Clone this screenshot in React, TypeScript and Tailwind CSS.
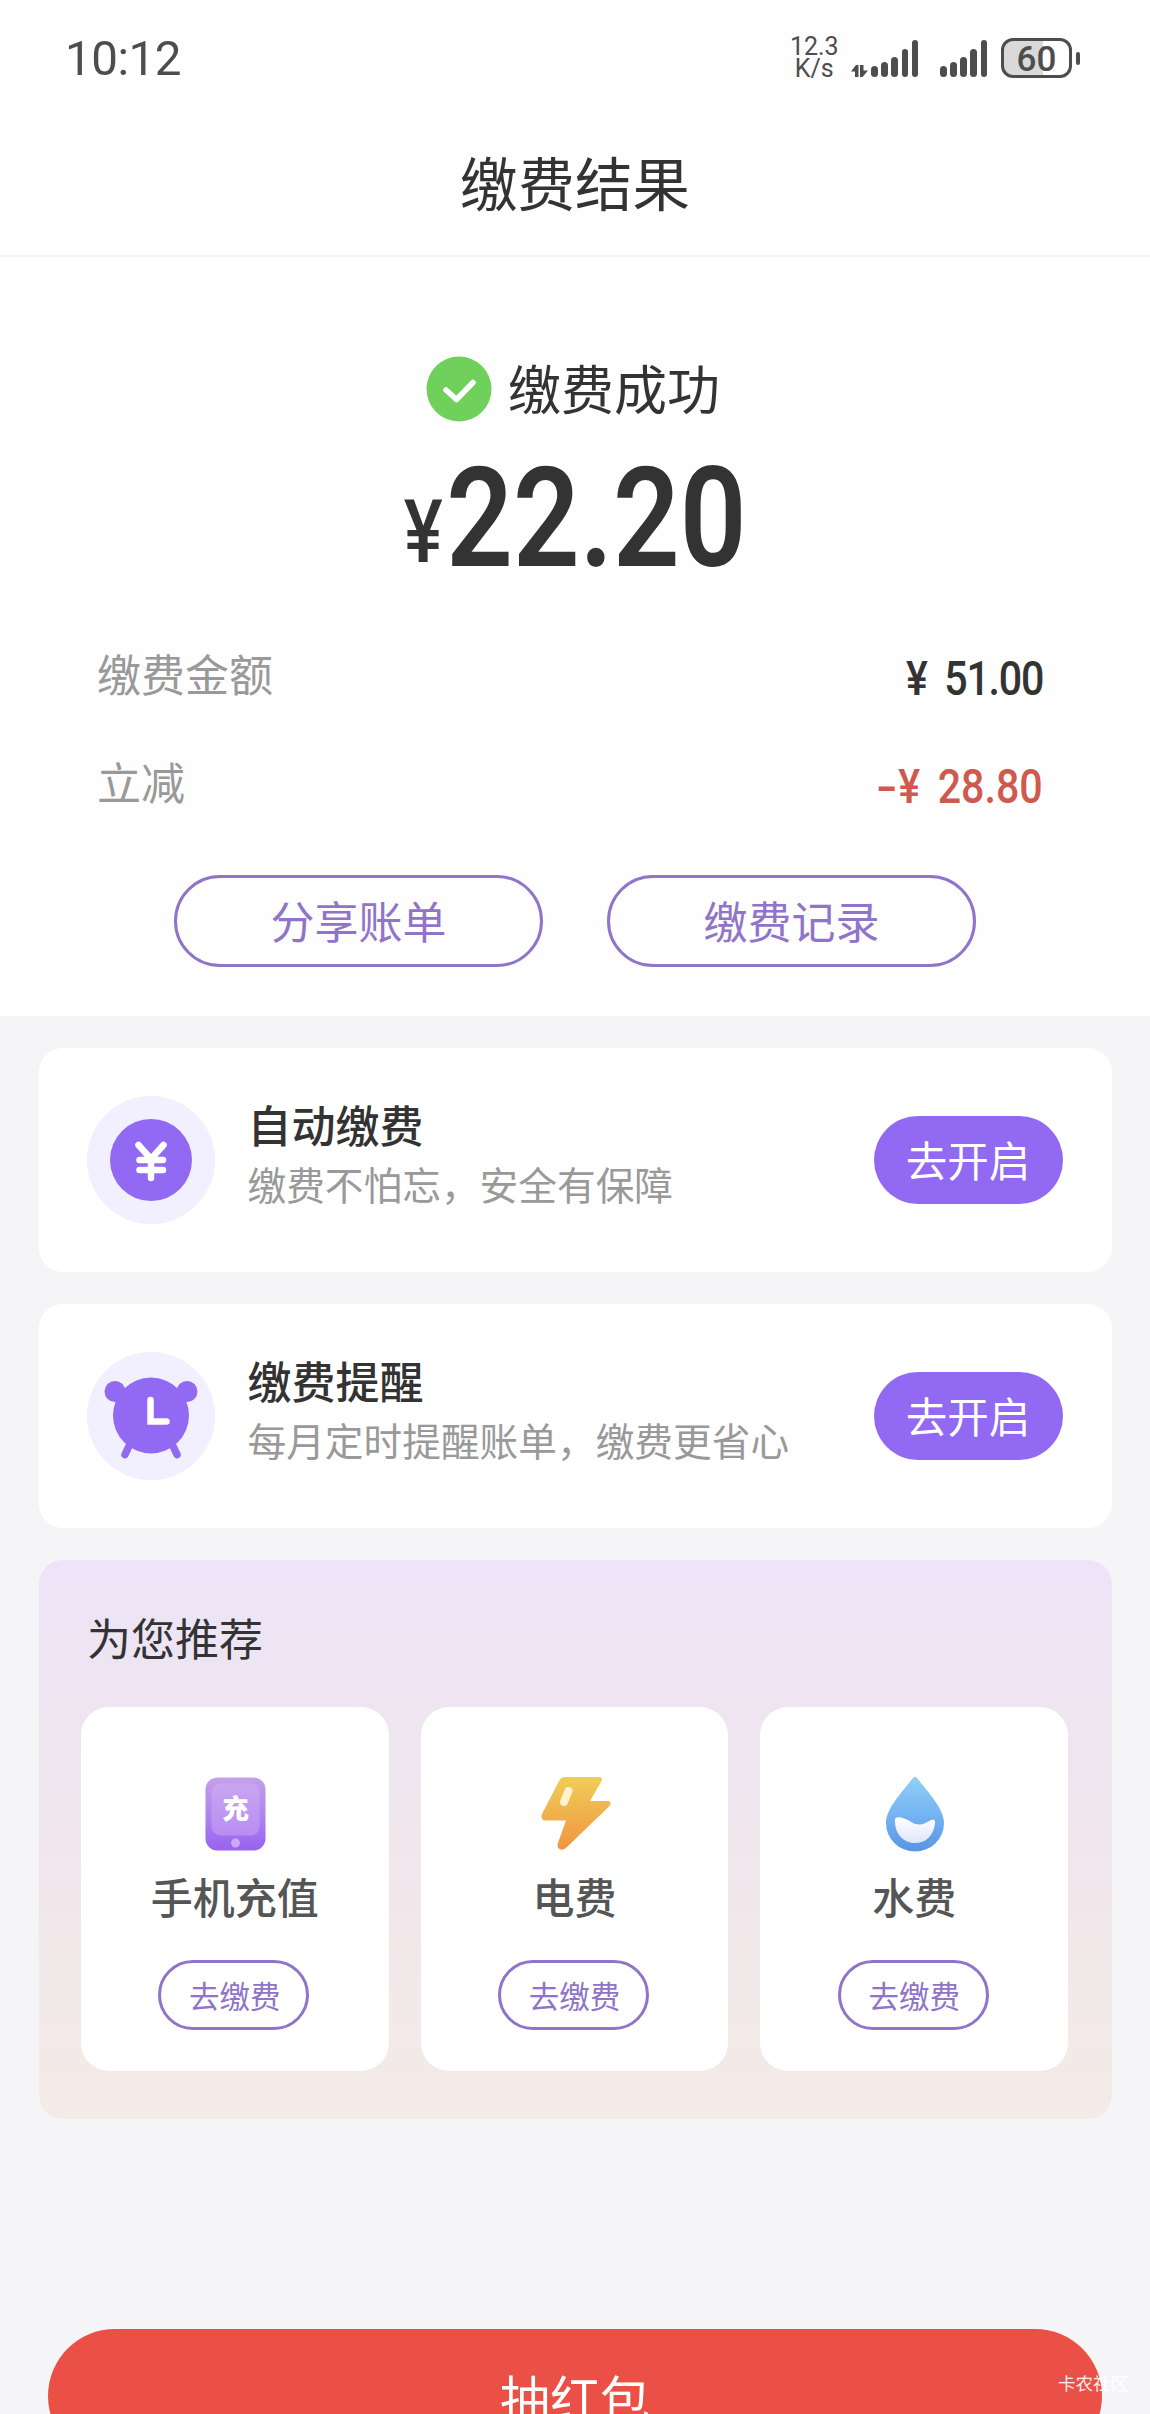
import { ReactNode } from "react";
import { clsx } from "clsx";

const BARS = [11, 15, 20, 28, 37];

function Signal() {
  return (
    <div className="flex items-end gap-[3.6px] h-[37px]">
      {BARS.map((h) => (
        <div key={h} className="w-[6.5px] rounded-full bg-[#4d4d4d]" style={{ height: h }} />
      ))}
    </div>
  );
}

function StatusBar() {
  return (
    <div className="flex h-[116px] items-center justify-between pl-[65px] pr-[70px] font-['Roboto'] text-[#4d4d4d]">
      <span className="origin-left scale-x-[0.97] pt-[2px] text-[49px] leading-[60px] tracking-[-0.5px]">10:12</span>
      <div className="flex items-center">
        <div className="mr-[13px] flex w-[48px] flex-col items-center text-[25px] leading-[22px]">
          <span>12.3</span>
          <span>K/s</span>
        </div>
        <div className="flex items-end pt-[1px]">
          <svg className="mr-[3px]" width="17" height="12" viewBox="0 0 17 12" fill="#4d4d4d">
            <path d="M0 6.5 L5 0 H7.5 V12 H4 V6.5 Z" />
            <path d="M9 0 H12.5 V5.5 H17 L11.5 12 H9 Z" />
          </svg>
          <Signal />
          <div className="w-[22px]" />
          <Signal />
        </div>
        {/* Battery */}
        <div className="ml-[14px] flex items-center gap-[4px]">
          <div className="flex h-[40px] w-[71px] items-center justify-center rounded-[12px] border-[3px] border-[#4d4d4d] bg-linear-to-r from-[#d9d9d9] from-60% to-white to-60% pt-[2px] text-[35px] font-medium leading-none">
            <span>60</span>
          </div>
          <div className="h-[13px] w-[4px] rounded-full bg-[#4d4d4d]" />
        </div>
      </div>
    </div>
  );
}

function CoinIcon() {
  return (
    <svg width="128" height="128" viewBox="0 0 128 128" className="shrink-0">
      <circle cx="64" cy="64" r="64" fill="#f2effe" />
      <circle cx="64" cy="64" r="41" fill="#9169f2" />
      <path
        d="M51.5 49 L64 63 L76.5 49 M64 63 V82 M52.5 64 H76 M52.5 74 H76"
        fill="none"
        stroke="#fff"
        strokeWidth="6.5"
        strokeLinecap="round"
        strokeLinejoin="round"
      />
    </svg>
  );
}

function ClockIcon() {
  return (
    <svg width="128" height="128" viewBox="0 0 128 128" className="shrink-0">
      <circle cx="64" cy="64" r="64" fill="#f2effe" />
      <g fill="#9169f2" stroke="#9169f2">
        <circle cx="28" cy="39.5" r="10.5" stroke="none" />
        <circle cx="100" cy="39.5" r="10.5" stroke="none" />
        <circle cx="64" cy="63.5" r="38" stroke="none" />
        <path d="M43 92 L38 102.5 M85 92 L90 102.5" strokeWidth="7.5" strokeLinecap="round" />
      </g>
      <path d="M63.5 48 V69.5 H79.5" fill="none" stroke="#fff" strokeWidth="6.5" strokeLinecap="round" />
    </svg>
  );
}

function PhoneIcon() {
  return (
    <svg width="61" height="74" viewBox="0 0 62 74" preserveAspectRatio="none">
      <defs>
        <linearGradient id="phone" x1="0" y1="0" x2="0" y2="1">
          <stop offset="0" stopColor="#c5a0ea" />
          <stop offset="0.6" stopColor="#ab7ef0" />
          <stop offset="1" stopColor="#9862ee" />
        </linearGradient>
        <linearGradient id="screen" x1="0" y1="0" x2="0" y2="1">
          <stop offset="0" stopColor="#c9a6f0" />
          <stop offset="1" stopColor="#b78df2" />
        </linearGradient>
      </defs>
      <rect x="0.5" y="0.5" width="61" height="73" rx="12" fill="url(#phone)" />
      <rect x="6.5" y="6.5" width="49" height="52" rx="9" fill="url(#screen)" />
      <text
        x="31"
        y="42"
        textAnchor="middle"
        fontSize="27"
        fontWeight="900"
        fill="#fff"
        className="font-['Noto_Sans_CJK_SC',sans-serif]"
      >
        充
      </text>
      <circle cx="31" cy="66" r="4.5" fill="#cdaaf5" />
    </svg>
  );
}

function BoltIcon() {
  return (
    <svg width="72" height="76" viewBox="0 0 72 76">
      <defs>
        <linearGradient id="bolt" x1="0" y1="0" x2="0" y2="1">
          <stop offset="0" stopColor="#f0cd58" />
          <stop offset="1" stopColor="#f09640" />
        </linearGradient>
      </defs>
      <path
        d="M25 1 H58 Q64 1 61 6 L50 25 H68 Q73 26 69 30.5 L27 71 Q23 75 19.5 73 Q16.500 71 18 67 L26 44.5 H5 Q0 43.5 2 38 L19 5 Q21 1 25 1 Z"
        fill="url(#bolt)"
      />
      <path d="M28.5 15 L24 26" stroke="#fff3cf" strokeWidth="8" strokeLinecap="round" />
    </svg>
  );
}

function DropIcon() {
  return (
    <svg width="60" height="76" viewBox="0 0 60 76">
      <defs>
        <linearGradient id="drop" x1="0" y1="0" x2="0" y2="1">
          <stop offset="0" stopColor="#92d0f6" />
          <stop offset="0.5" stopColor="#74b4f2" />
          <stop offset="1" stopColor="#5a94e4" />
        </linearGradient>
        <linearGradient id="water" x1="0" y1="0" x2="0" y2="1">
          <stop offset="0" stopColor="#fff" />
          <stop offset="1" stopColor="#dfe6fb" />
        </linearGradient>
      </defs>
      <path d="M28 2 Q30 -0.5 32 2 C44 17 59 33 59 47 A29 28.5 0 0 1 1 47 C1 33 16 17 28 2 Z" fill="url(#drop)" />
      <path
        d="M10 43 Q11 40.5 16 41.5 C24 43 28 49 35 48.5 C41 48 43 44.5 48 43.5 Q50.5 43.5 50 48 C48 60 41 67 30 67 C18 67 9 57 10 43 Z"
        fill="url(#water)"
      />
    </svg>
  );
}

function AmountRow({ label, value, discount }: { label: string; value: string; discount?: boolean }) {
  return (
    <div className="flex h-[108px] items-center justify-between pl-[97px] pr-[108px]">
      <span className="text-[44px] leading-[60px] text-[#999]">{label}</span>
      <span
        className={clsx(
          "flex origin-right scale-x-[0.84] pt-[11px] font-['Roboto'] text-[49px] font-medium leading-[60px]",
          discount ? "mr-[-1px] text-[#cf594f]" : "mr-[-1px] tracking-[-1.5px] text-[#333]"
        )}
      >
        {discount && <span className="mr-[1px] origin-right scale-x-[1.5]">-</span>}
        <span>¥</span>
        <span className="ml-[21px]">{value}</span>
      </span>
    </div>
  );
}

function ServiceCard({ icon, title, desc }: { icon: ReactNode; title: string; desc: string }) {
  return (
    <div className="flex h-[224px] items-center rounded-[24px] bg-white pl-[48.5px] pr-[49px]">
      {icon}
      <div className="ml-[32.5px] flex flex-1 flex-col pb-[14px]">
        <span className="text-[44px] font-medium leading-[60px] text-[#333]">{title}</span>
        <span className="text-[38.7px] leading-[58px] text-[#999]">{desc}</span>
      </div>
      <button className="h-[88px] w-[189px] rounded-full bg-[#9169f2] pb-[1px] text-[41.5px] text-white">去开启</button>
    </div>
  );
}

const RECOMMENDS = [
  { label: "手机充值", icon: <PhoneIcon /> },
  { label: "电费", icon: <BoltIcon /> },
  { label: "水费", icon: <DropIcon /> },
];

export default function App() {
  return (
    <main className="relative flex h-[2414px] w-[1150px] flex-col overflow-hidden bg-[#f5f5f7] font-['Noto_Sans_CJK_SC',sans-serif]">
      {/* Result panel */}
      <section className="flex h-[1016px] shrink-0 flex-col bg-[#fefefe]">
        <StatusBar />
        <header className="flex h-[141px] items-center justify-center border-b-2 border-[#f4f4f4] pb-[9px]">
          <h1 className="text-[57.5px] leading-[80px] text-[#333]">缴费结果</h1>
        </header>

        <div className="mt-[90px] flex h-[84px] items-center justify-center gap-[16px] pr-[4px]">
          <svg width="66" height="66" viewBox="0 0 66 66">
            <circle cx="33" cy="33" r="32.5" fill="#6fd15c" />
            <path
              d="M20 34 L30.5 43.5 L47 26.5"
              fill="none"
              stroke="#fff"
              strokeWidth="5.5"
              strokeLinecap="round"
              strokeLinejoin="round"
            />
          </svg>
          <span className="pb-[4px] text-[53px] leading-[80px] text-[#333]">缴费成功</span>
        </div>

        <div className="flex h-[188px] items-baseline justify-center pt-[7px] font-['Roboto'] text-[#333]">
          <span className="flex scale-x-[0.835] items-baseline gap-[4px] font-semibold">
            <span className="pb-[4px] text-[88px] font-medium leading-[160px] -translate-y-1">¥</span>
            <span className="text-[140px] leading-[160px]">22.20</span>
          </span>
        </div>

        <AmountRow label="缴费金额" value="51.00" />
        <AmountRow label="立减" value="28.80" discount />

        <div className="mt-[40px] flex justify-center gap-[64px]">
          {["分享账单", "缴费记录"].map((text) => (
            <button
              key={text}
              className="h-[92px] w-[369px] rounded-full border-[3px] border-[#9074c8] pb-[2px] text-[44px] text-[#9074c8]"
            >
              {text}
            </button>
          ))}
        </div>
      </section>

      <div className="flex flex-col gap-[32px] px-[38.5px] pt-[32px]">
        <ServiceCard icon={<CoinIcon />} title="自动缴费" desc="缴费不怕忘，安全有保障" />
        <ServiceCard icon={<ClockIcon />} title="缴费提醒" desc="每月定时提醒账单，缴费更省心" />

        {/* Recommendations */}
        <section className="h-[559px] rounded-[24px] bg-linear-to-b from-[#ece4f7] via-[#f0e6ec] to-[#f4ebe7] pl-[42.5px] pr-[43.5px] pt-[47px]">
          <h2 className="pl-[6px] text-[44px] leading-[60px] text-[#333]">为您推荐</h2>
          <div className="mt-[40px] flex gap-[32px]">
            {RECOMMENDS.map((item) => (
              <div key={item.label} className="flex h-[364px] flex-1 flex-col items-center rounded-[28px] bg-white pt-[69px]">
                <div className="flex h-[76px] items-center pl-[2px]">{item.icon}</div>
                <span className="mt-[14px] text-[42px] font-medium leading-[60px] text-[#555]">{item.label}</span>
                <button className="mr-[2px] mt-[34px] h-[70px] w-[151px] rounded-full border-[3px] border-[#9074c8] pl-[2px] pt-[1px] text-[30.5px] text-[#9074c8]">
                  去缴费
                </button>
              </div>
            ))}
          </div>
        </section>
      </div>

      <button className="mx-[48px] mt-[210px] h-[134px] shrink-0 rounded-full bg-[#ea5046] pt-[1px] text-[50px] text-white">
        抽红包
      </button>

      {/* Corner mark */}
      <span className="absolute bottom-[19px] right-[22px] text-[17.5px] leading-[24px] text-white/90">卡农社区</span>
    </main>
  );
}
